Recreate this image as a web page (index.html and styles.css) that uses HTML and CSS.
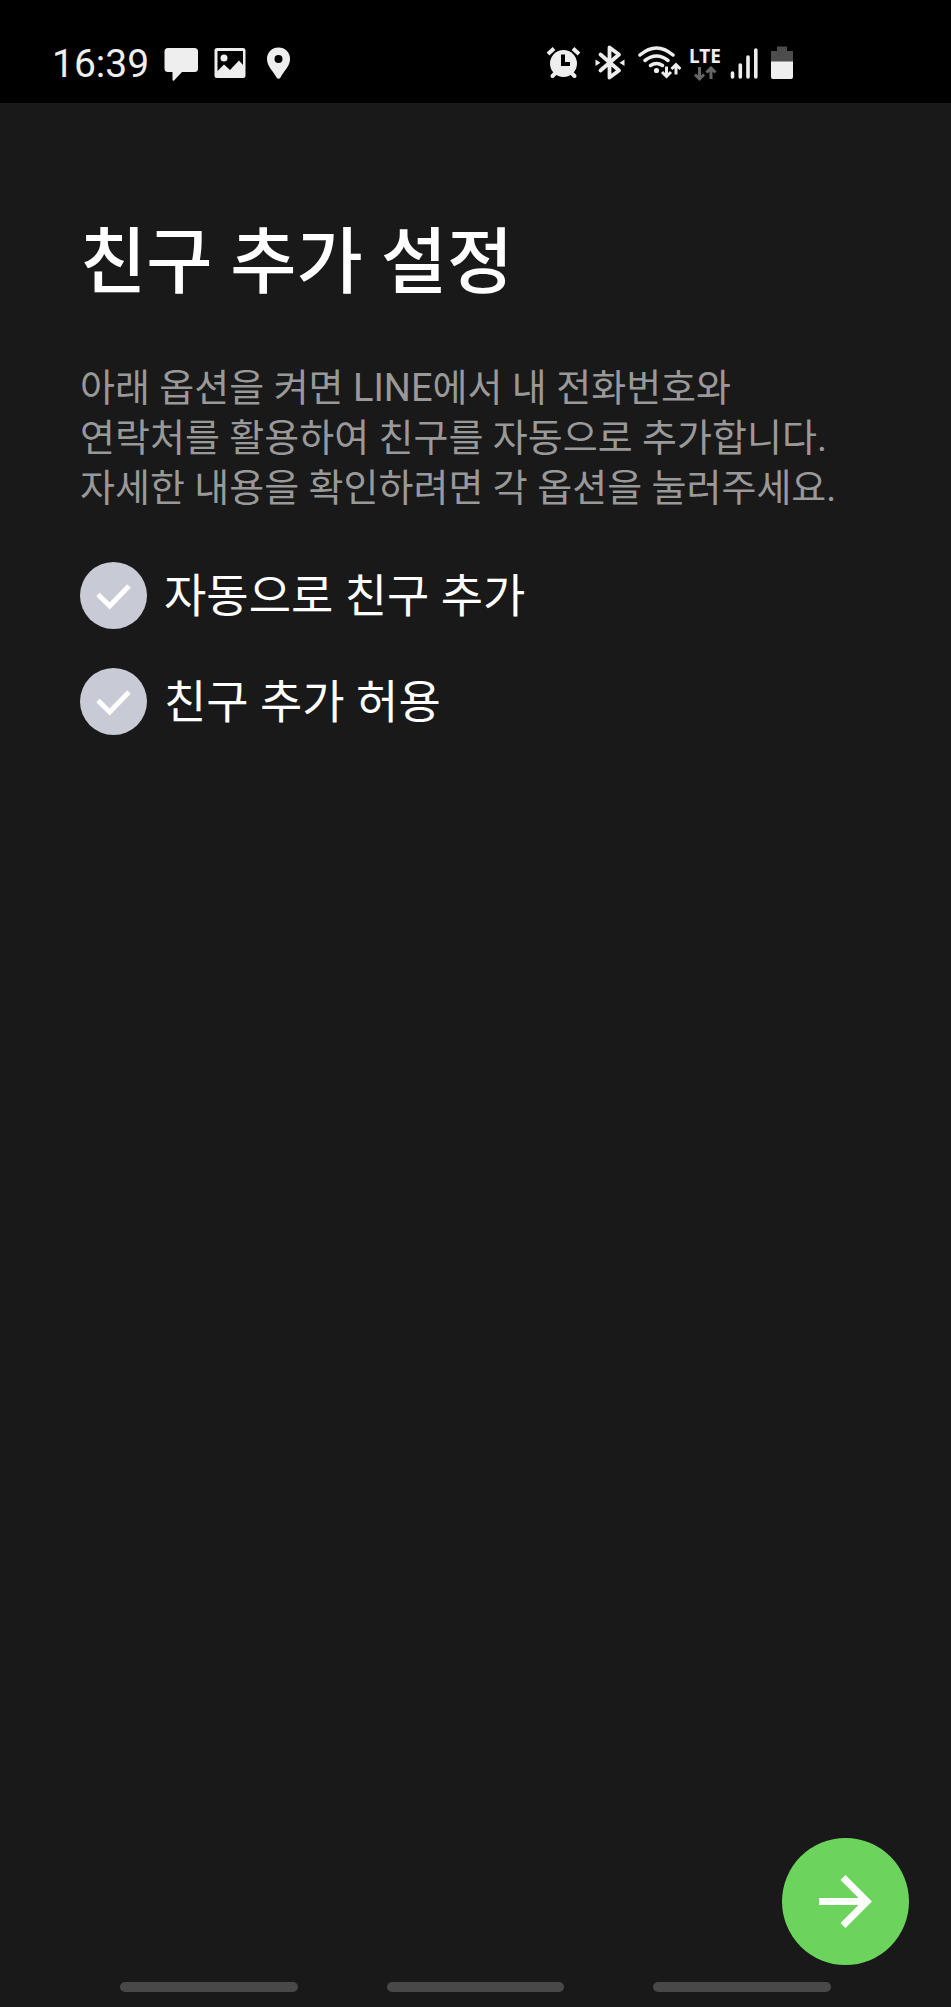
FILE: index.html
```html
<!DOCTYPE html>
<html lang="ko">
<head>
<meta charset="utf-8">
<meta name="viewport" content="width=device-width, initial-scale=1">
<title>친구 추가 설정</title>
<link rel="stylesheet" href="styles.css">
</head>
<body>
<header class="status">
  <div class="status-left">
    <time class="clock">16:39</time>
    <svg class="icon" width="38" height="40" viewBox="162 44 38 40" aria-hidden="true">
      <path d="M168 48h26.500a3.500 3.500 0 0 1 3.500 3.500v17a3.500 3.500 0 0 1-3.500 3.500H182l-7.500 8a1 1 0 0 1-2-.6V72H168a3.500 3.500 0 0 1-3.500-3.500v-17A3.500 3.500 0 0 1 168 48z"/>
    </svg>
    <svg class="icon" width="34" height="40" viewBox="212 44 34 40" aria-hidden="true">
      <path fill-rule="evenodd" d="M216 48h26a2.500 2.500 0 0 1 2.500 2.500v25a2.500 2.500 0 0 1-2.500 2.500H216a2.500 2.500 0 0 1-2.500-2.500v-25A2.500 2.500 0 0 1 216 48zM216.500 51v20l6.500-6.500 6 5.500 9-9.500 4 4.500V51z"/>
      <circle cx="223" cy="58" r="3.500"/>
    </svg>
    <svg class="icon" width="36" height="40" viewBox="258 44 36 40" aria-hidden="true">
      <path fill-rule="evenodd" d="M276.500 47.500A11.300 11.300 0 0 0 265 59c0 7.500 6 11.500 9.500 18.500q2 2.500 4 0C282 70.500 288 66.500 288 59a11.300 11.300 0 0 0-11.500-11.500zm0 7.500a4 4 0 1 1 0 8 4 4 0 0 1 0-8z"/>
    </svg>
  </div>
  <div class="status-right">
    <svg class="icon" width="40" height="40" viewBox="545 44 40 40" aria-hidden="true">
      <circle cx="563.500" cy="63.500" r="13.500"/>
      <g class="line"><path stroke-width="4" d="M548 54l6-5.500M573 48.500l6 5.500"/><path stroke-width="4" stroke-linecap="round" d="M552.500 76l4-4M574.500 76l-4-4"/></g>
      <path class="cut" stroke-width="4" d="M563 54.500v9.500h7"/>
    </svg>
    <svg class="icon" width="34" height="40" viewBox="593 44 34 40" aria-hidden="true">
      <path class="line" stroke-width="3.800" stroke-linejoin="round" stroke-linecap="round" d="M600.500 54.500l18.500 16-9.500 7V47.500l9.500 7-18.500 16"/>
      <path d="M595.500 59.500l5 3.300-5 3.300zM624.500 59.500l-5 3.300 5 3.300z"/>
    </svg>
    <svg class="icon" width="46" height="40" viewBox="635 44 46 40" aria-hidden="true">
      <path class="line" stroke-width="3.500" stroke-linecap="round" d="M640 55q16.500-14 33 0M645 60.500q11.500-9 23 0M650.500 65.500q6-4 12 0"/>
      <circle cx="656.500" cy="70.500" r="2.600"/>
      <path class="line" stroke-width="3" d="M666.500 66.500v10M662 72l4.500 4.500L671 72M676 74.500v-10M671.500 69l4.500-4.500 4.500 4.500"/>
    </svg>
    <span class="network">
      <span class="network-name">LTE</span>
      <svg class="icon" width="24" height="16" viewBox="0 0 24 16" aria-hidden="true">
        <path class="dim-line" stroke-width="3" d="M6.500 1v12M2 8.500L6.500 13 11 8.500M18 13V2M13.500 6.500L18 2l4.500 4.500"/>
      </svg>
    </span>
    <svg class="icon" width="32" height="40" viewBox="729 44 32 40" aria-hidden="true">
      <path class="line" stroke-width="3.600" stroke-linecap="round" d="M732.500 73v4M740.300 65v12M748 57v20M755.800 50v27"/>
    </svg>
    <svg class="icon" width="26" height="40" viewBox="769 44 26 40" aria-hidden="true">
      <path class="dim" d="M777 46.500h10V51h6v11h-22V51h6z"/>
      <path d="M771 61.500h22V77a2 2 0 0 1-2 2h-18a2 2 0 0 1-2-2z"/>
    </svg>
  </div>
</header>
<main class="content">
  <h1 class="title">친구 추가 설정</h1>
  <p class="description">아래 옵션을 켜면 LINE에서 내 전화번호와<br>연락처를 활용하여 친구를 자동으로 추가합니다.<br>자세한 내용을 확인하려면 각 옵션을 눌러주세요.</p>
  <div class="options">
    <label class="option">
      <span class="check">
        <input class="check-input" type="checkbox" name="auto-add">
        <svg class="check-mark" viewBox="0 0 67 67" aria-hidden="true"><path d="M18 32.500L29.700 44 49 24"/></svg>
      </span>
      <span class="option-text">자동으로 친구 추가</span>
    </label>
    <label class="option">
      <span class="check">
        <input class="check-input" type="checkbox" name="allow-add">
        <svg class="check-mark" viewBox="0 0 67 67" aria-hidden="true"><path d="M18 32.500L29.700 44 49 24"/></svg>
      </span>
      <span class="option-text">친구 추가 허용</span>
    </label>
  </div>
  <button class="next" type="button" aria-label="다음">
    <svg class="next-arrow" viewBox="0 0 127 127" aria-hidden="true"><path d="M37 63.500h47M61 39.500l24 24-24 24"/></svg>
  </button>
</main>
<footer class="nav">
  <span class="nav-bar"></span>
  <span class="nav-bar"></span>
  <span class="nav-bar"></span>
</footer>
</body>
</html>
```

FILE: styles.css
```css
* {
  box-sizing: border-box;
}

body {
  display: flex;
  flex-direction: column;
  min-height: 100vh;
  margin: 0;
  background: #191919;
  color: #fff;
  font-family: Roboto, "Noto Sans CJK KR", sans-serif;
}

.status {
  display: flex;
  justify-content: space-between;
  padding: 44px 156px 19px 52px;
  background: #000;
  color: #eee;
}

.status-left,
.status-right {
  display: flex;
  align-items: center;
}

.status-left {
  gap: 13px;
}

.status-right {
  gap: 8px;
}

.clock {
  font-size: 39px;
  line-height: 40px;
}

.icon {
  display: block;
  fill: #eee;
}

.icon .line,
.icon .cut,
.icon .dim-line {
  fill: none;
  stroke: #eee;
}

.icon .cut {
  stroke: #000;
}

.icon .dim-line {
  stroke: #666;
}

.icon .dim {
  fill: #4c4c4c;
}

.network {
  display: flex;
  flex-direction: column;
  align-items: center;
  width: 32px;
}

.network-name {
  font: bold 19px/20px "Noto Sans", sans-serif;
}

.content {
  display: flex;
  flex: 1;
  flex-direction: column;
  padding: 122px 42px 0 80px;
}

.title {
  margin: 0;
  font-size: 72px;
  font-weight: 500;
  line-height: 76px;
}

.description {
  margin: 62px 0 49px;
  color: #999;
  font-size: 38px;
  line-height: 50px;
}

.options {
  display: flex;
  flex-direction: column;
  align-items: flex-start;
  gap: 39px;
}

.option {
  display: flex;
  align-items: center;
  gap: 17px;
  cursor: pointer;
}

.check {
  display: grid;
  width: 67px;
  height: 67px;
}

.check-input,
.check-mark {
  grid-area: 1 / 1;
  width: 100%;
  height: 100%;
  margin: 0;
}

.check-input {
  appearance: none;
  border-radius: 50%;
  background: #c8cad5;
  cursor: pointer;
}

.check-input:checked {
  background: #6cd45d;
}

.check-mark {
  fill: none;
  stroke: #fff;
  stroke-width: 5;
  pointer-events: none;
}

.option-text {
  font-size: 46px;
  line-height: 60px;
}

.next {
  align-self: flex-end;
  width: 127px;
  height: 127px;
  margin-top: auto;
  padding: 0;
  border: 0;
  border-radius: 50%;
  background: #6cd45d;
  cursor: pointer;
}

.next-arrow {
  display: block;
  fill: none;
  stroke: #fff;
  stroke-width: 7;
}

.nav {
  display: flex;
  justify-content: space-between;
  padding: 17px 120px 15px;
}

.nav-bar {
  width: 25%;
  height: 10px;
  border-radius: 5px;
  background: #484848;
}
```
